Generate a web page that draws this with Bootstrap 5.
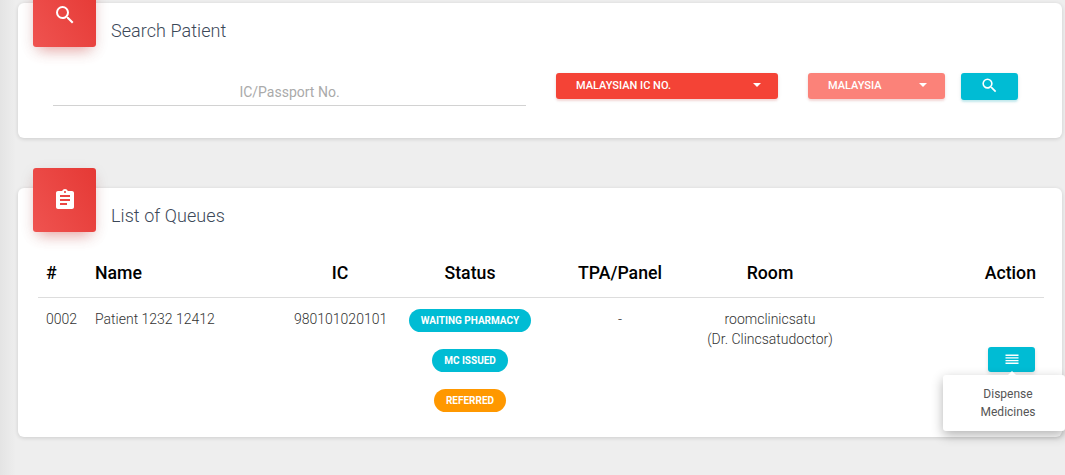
<!DOCTYPE html>
<html lang="en">
<head>
<meta charset="utf-8">
<title>Queues</title>
<link rel="stylesheet" href="https://cdn.jsdelivr.net/npm/bootstrap@5.3.0/dist/css/bootstrap.min.css">
<style>
html,body{height:475px;overflow:hidden}
body{background:#eee;font-family:Roboto,"Liberation Sans",sans-serif;color:#3c4858;font-size:14px;position:relative}
.side-shade{position:absolute;left:0;top:0;bottom:0;width:16px;background:linear-gradient(90deg,#e4e4e4,#eee)}
.page-wrap{position:relative;padding:3px 3px 0 18px}
.panel{background:#fff;border-radius:6px;box-shadow:0 1px 4px rgba(0,0,0,.14);position:relative}
.panel-search{height:135px;margin-bottom:50px}
.panel-queue{height:249px}
.panel-head{display:flex;padding-left:15px;height:64px}
.head-badge{width:63px;height:64px;margin-top:-20px;border-radius:3px;background:linear-gradient(60deg,#ef5350,#e53935);box-shadow:0 8px 14px -6px rgba(229,57,53,.45),0 4px 16px rgba(0,0,0,.08);display:flex;align-items:center;justify-content:center;flex:none}
.head-title{font-weight:300;font-size:18px;letter-spacing:.06px;color:#3c4858;margin:0 0 0 15px;line-height:21px;padding-top:17px}
.search-row{display:flex;align-items:flex-start;padding-left:35px;margin-top:3px}
.ic-field{width:473px;height:36px;border-bottom:1px solid #d2d2d2;text-align:center;color:#aaa;font-weight:400;font-size:14px;line-height:16px;padding-top:14px;flex:none}
.pick{height:26px;border:0;border-radius:3px;color:#fff;font-size:11px;font-weight:500;display:flex;align-items:center;justify-content:space-between;padding:0 17px 2px 20px;box-shadow:0 2px 2px rgba(244,67,54,.14),0 1px 4px rgba(0,0,0,.08);text-transform:uppercase;line-height:13px}
.pick::after{content:"";border-left:4px solid transparent;border-right:4px solid transparent;border-top:4px solid #fff}
.pick-ic{width:222px;background:#f44336;margin:3px 0 0 30px}
.pick-country{width:137px;background:#fb8279;margin:3px 0 0 30px;padding-right:18px}
.btn-go{width:57px;height:27px;background:#00bcd4;border:0;border-radius:3px;margin:3px 0 0 16px;padding:0 0 3px;display:flex;align-items:center;justify-content:center;box-shadow:0 2px 2px rgba(0,188,212,.2),0 1px 4px rgba(0,0,0,.08)}
.queue-wrap{padding:0 20px;margin-top:-2px}
.queue-table{table-layout:fixed;width:1006px;margin:0;--bs-table-bg:transparent}
.queue-table th{font-size:17.7px;font-weight:500;color:#000;height:47px;padding:8px;vertical-align:middle;border-bottom:1px solid #ddd;line-height:20px}
.queue-table td{font-size:14px;font-weight:300;color:#333;padding:11px 8px 0;border:0;line-height:20px;vertical-align:top}
.c1{width:49px}.c2{width:199px}.c3{width:108px}.c4{width:152px}.c5{width:148px}.c6{width:152px}.c7{width:198px}
.state{display:block;width:max-content;margin:0 auto 17px;border-radius:12px;color:#fff;font-size:10px;font-weight:700;height:23px;line-height:23px;text-transform:uppercase}
.state-a{background:#00bcd4;padding:0 12px}
.state-b{background:#00bcd4;padding:0 12px}
.state-c{background:#ff9800;padding:0 12px}
.btn-menu{display:flex;width:47px;height:25px;background:#00bcd4;border:0;border-radius:3px;margin:38px 1px 0 auto;padding:0;align-items:center;justify-content:center;box-shadow:0 2px 4px rgba(0,0,0,.12)}
.menu-pop{position:absolute;left:925px;top:187px;width:122px;height:56px;background:#fff;border-radius:3px;box-shadow:0 4px 12px rgba(0,0,0,.3);text-align:center;font-size:12px;line-height:18px;color:#555;padding:10px 0 0 8px;font-weight:400}
.menu-pop::before{content:"";position:absolute;left:65px;top:-4px;border-left:4px solid transparent;border-right:4px solid transparent;border-bottom:4px solid #fff}
</style>
</head>
<body>
<div class="side-shade"></div>
<div class="page-wrap">
  <section class="panel panel-search">
    <div class="panel-head">
      <div class="head-badge">
        <svg width="24" height="24" viewBox="0 0 24 24" fill="#fff"><path d="M15.5 14h-.79l-.28-.27A6.47 6.47 0 0 0 16 9.5 6.5 6.5 0 1 0 9.5 16c1.61 0 3.09-.59 4.23-1.57l.27.28v.79l5 4.99L20.49 19l-4.99-5zm-6 0C7.01 14 5 11.99 5 9.5S7.01 5 9.5 5 14 7.01 14 9.5 11.99 14 9.5 14z"/></svg>
      </div>
      <h4 class="head-title">Search Patient</h4>
    </div>
    <div class="search-row">
      <div class="ic-field">IC/Passport No.</div>
      <button type="button" class="pick pick-ic">Malaysian IC No.</button>
      <button type="button" class="pick pick-country">Malaysia</button>
      <button type="button" class="btn-go" aria-label="Search">
        <svg width="19" height="19" viewBox="0 0 24 24" fill="#fff"><path d="M15.5 14h-.79l-.28-.27A6.47 6.47 0 0 0 16 9.5 6.5 6.5 0 1 0 9.5 16c1.61 0 3.09-.59 4.23-1.57l.27.28v.79l5 4.99L20.49 19l-4.99-5zm-6 0C7.01 14 5 11.99 5 9.5S7.01 5 9.5 5 14 7.01 14 9.5 11.99 14 9.5 14z"/></svg>
      </button>
    </div>
  </section>
  <section class="panel panel-queue">
    <div class="panel-head">
      <div class="head-badge">
        <svg width="24" height="24" viewBox="0 0 24 24" fill="#fff"><path d="M19 3h-4.18C14.4 1.84 13.3 1 12 1s-2.4.84-2.82 2H5c-1.1 0-2 .9-2 2v14c0 1.1.9 2 2 2h14c1.1 0 2-.9 2-2V5c0-1.1-.9-2-2-2zm-7 0c.55 0 1 .45 1 1s-.45 1-1 1-1-.45-1-1 .45-1 1-1zm2 14H7v-2h7v2zm3-4H7v-2h10v2zm0-4H7V7h10v2z"/></svg>
      </div>
      <h4 class="head-title">List of Queues</h4>
    </div>
    <div class="queue-wrap">
      <table class="table queue-table">
        <colgroup><col class="c1"><col class="c2"><col class="c3"><col class="c4"><col class="c5"><col class="c6"><col class="c7"></colgroup>
        <thead>
          <tr><th>#</th><th>Name</th><th class="text-center">IC</th><th class="text-center">Status</th><th class="text-center">TPA/Panel</th><th class="text-center">Room</th><th class="text-end">Action</th></tr>
        </thead>
        <tbody>
          <tr>
            <td>0002</td>
            <td>Patient 1232 12412</td>
            <td class="text-center">980101020101</td>
            <td class="text-center">
              <span class="state state-a">Waiting Pharmacy</span>
              <span class="state state-b">MC Issued</span>
              <span class="state state-c">Referred</span>
            </td>
            <td class="text-center">-</td>
            <td class="text-center">roomclinicsatu<br>(Dr. Clincsatudoctor)</td>
            <td class="text-end">
              <button type="button" class="btn-menu" aria-label="Menu">
                <svg width="14" height="14" viewBox="0 0 14 14" fill="#fff"><path d="M.5 2.5h13v1.4H.5zM.5 5.2h13v1.4H.5zM.5 7.9h13v1.4H.5zM.5 10.6h13V12H.5z"/></svg>
              </button>
            </td>
          </tr>
        </tbody>
      </table>
    </div>
    <div class="menu-pop">Dispense<br>Medicines</div>
  </section>
</div>
<script src="https://cdn.jsdelivr.net/npm/bootstrap@5.3.0/dist/js/bootstrap.bundle.min.js"></script>
</body>
</html>
